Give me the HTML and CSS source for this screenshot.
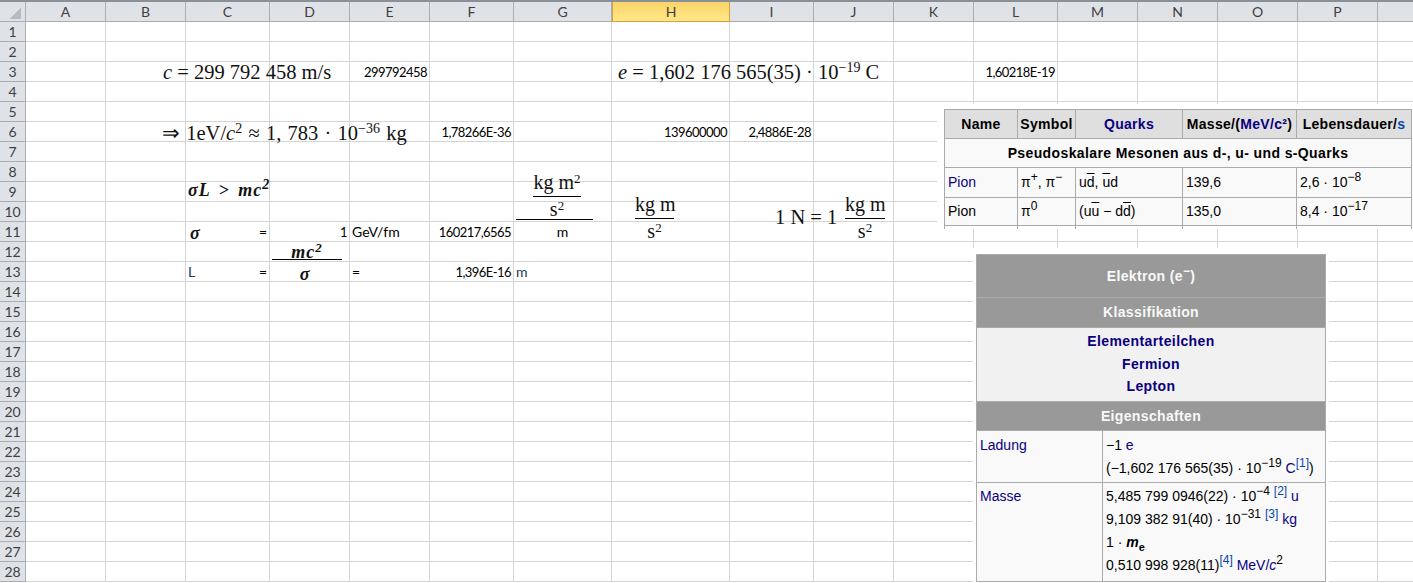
FILE: index.html
```html
<!DOCTYPE html>
<html lang="de">
<head>
    <meta charset="UTF-8">
    <title>Elektron Tabelle</title>
    <link rel="stylesheet" href="styles.css">
</head>
<body>
<div class="sheet">
    <table class="grid">
        <colgroup>
            <col class="c-head"><col class="c80"><col class="c80"><col class="c84"><col class="c80"><col class="c80"><col class="c84"><col class="c98"><col class="c118"><col class="c84"><col class="c80"><col class="c80"><col class="c84"><col class="c80"><col class="c80"><col class="c80"><col class="c80"><col class="c36">
        </colgroup>
        <tr class="head-row"><th class="corner"></th><th>A</th><th>B</th><th>C</th><th>D</th><th>E</th><th>F</th><th>G</th><th class="active">H</th><th>I</th><th>J</th><th>K</th><th>L</th><th>M</th><th>N</th><th>O</th><th>P</th><th></th></tr>
        <tr><th>1</th><td></td><td></td><td></td><td></td><td></td><td></td><td></td><td></td><td></td><td></td><td></td><td></td><td></td><td></td><td></td><td></td><td></td></tr>
        <tr><th>2</th><td></td><td></td><td></td><td></td><td></td><td></td><td></td><td></td><td></td><td></td><td></td><td></td><td></td><td></td><td></td><td></td><td></td></tr>
        <tr><th>3</th><td></td><td></td><td></td><td></td><td class="num">299792458</td><td></td><td></td><td></td><td></td><td></td><td></td><td class="num">1,60218E-19</td><td></td><td></td><td></td><td></td><td></td></tr>
        <tr><th>4</th><td></td><td></td><td></td><td></td><td></td><td></td><td></td><td></td><td></td><td></td><td></td><td></td><td></td><td></td><td></td><td></td><td></td></tr>
        <tr><th>5</th><td></td><td></td><td></td><td></td><td></td><td></td><td></td><td></td><td></td><td></td><td></td><td></td><td></td><td></td><td></td><td></td><td></td></tr>
        <tr><th>6</th><td></td><td></td><td></td><td></td><td></td><td class="num">1,78266E-36</td><td></td><td class="num">139600000</td><td class="num">2,4886E-28</td><td></td><td></td><td></td><td></td><td></td><td></td><td></td><td></td></tr>
        <tr><th>7</th><td></td><td></td><td></td><td></td><td></td><td></td><td></td><td></td><td></td><td></td><td></td><td></td><td></td><td></td><td></td><td></td><td></td></tr>
        <tr><th>8</th><td></td><td></td><td></td><td></td><td></td><td></td><td></td><td></td><td></td><td></td><td></td><td></td><td></td><td></td><td></td><td></td><td></td></tr>
        <tr><th>9</th><td></td><td></td><td></td><td></td><td></td><td></td><td></td><td></td><td></td><td></td><td></td><td></td><td></td><td></td><td></td><td></td><td></td></tr>
        <tr><th>10</th><td></td><td></td><td></td><td></td><td></td><td></td><td></td><td></td><td></td><td></td><td></td><td></td><td></td><td></td><td></td><td></td><td></td></tr>
        <tr><th>11</th><td></td><td></td><td class="eq">=</td><td class="num">1</td><td>GeV/fm</td><td class="num">160217,6565</td><td class="mid">m</td><td></td><td></td><td></td><td></td><td></td><td></td><td></td><td></td><td></td><td></td></tr>
        <tr><th>12</th><td></td><td></td><td></td><td></td><td></td><td></td><td></td><td></td><td></td><td></td><td></td><td></td><td></td><td></td><td></td><td></td><td></td></tr>
        <tr><th>13</th><td></td><td></td><td class="split"><span class="blue">L</span><span>=</span></td><td></td><td>=</td><td class="num">1,396E-16</td><td class="blue">m</td><td></td><td></td><td></td><td></td><td></td><td></td><td></td><td></td><td></td><td></td></tr>
        <tr><th>14</th><td></td><td></td><td></td><td></td><td></td><td></td><td></td><td></td><td></td><td></td><td></td><td></td><td></td><td></td><td></td><td></td><td></td></tr>
        <tr><th>15</th><td></td><td></td><td></td><td></td><td></td><td></td><td></td><td></td><td></td><td></td><td></td><td></td><td></td><td></td><td></td><td></td><td></td></tr>
        <tr><th>16</th><td></td><td></td><td></td><td></td><td></td><td></td><td></td><td></td><td></td><td></td><td></td><td></td><td></td><td></td><td></td><td></td><td></td></tr>
        <tr><th>17</th><td></td><td></td><td></td><td></td><td></td><td></td><td></td><td></td><td></td><td></td><td></td><td></td><td></td><td></td><td></td><td></td><td></td></tr>
        <tr><th>18</th><td></td><td></td><td></td><td></td><td></td><td></td><td></td><td></td><td></td><td></td><td></td><td></td><td></td><td></td><td></td><td></td><td></td></tr>
        <tr><th>19</th><td></td><td></td><td></td><td></td><td></td><td></td><td></td><td></td><td></td><td></td><td></td><td></td><td></td><td></td><td></td><td></td><td></td></tr>
        <tr><th>20</th><td></td><td></td><td></td><td></td><td></td><td></td><td></td><td></td><td></td><td></td><td></td><td></td><td></td><td></td><td></td><td></td><td></td></tr>
        <tr><th>21</th><td></td><td></td><td></td><td></td><td></td><td></td><td></td><td></td><td></td><td></td><td></td><td></td><td></td><td></td><td></td><td></td><td></td></tr>
        <tr><th>22</th><td></td><td></td><td></td><td></td><td></td><td></td><td></td><td></td><td></td><td></td><td></td><td></td><td></td><td></td><td></td><td></td><td></td></tr>
        <tr><th>23</th><td></td><td></td><td></td><td></td><td></td><td></td><td></td><td></td><td></td><td></td><td></td><td></td><td></td><td></td><td></td><td></td><td></td></tr>
        <tr><th>24</th><td></td><td></td><td></td><td></td><td></td><td></td><td></td><td></td><td></td><td></td><td></td><td></td><td></td><td></td><td></td><td></td><td></td></tr>
        <tr><th>25</th><td></td><td></td><td></td><td></td><td></td><td></td><td></td><td></td><td></td><td></td><td></td><td></td><td></td><td></td><td></td><td></td><td></td></tr>
        <tr><th>26</th><td></td><td></td><td></td><td></td><td></td><td></td><td></td><td></td><td></td><td></td><td></td><td></td><td></td><td></td><td></td><td></td><td></td></tr>
        <tr><th>27</th><td></td><td></td><td></td><td></td><td></td><td></td><td></td><td></td><td></td><td></td><td></td><td></td><td></td><td></td><td></td><td></td><td></td></tr>
        <tr><th>28</th><td></td><td></td><td></td><td></td><td></td><td></td><td></td><td></td><td></td><td></td><td></td><td></td><td></td><td></td><td></td><td></td><td></td></tr>
    </table>

    <!-- formeln liegen frei auf dem blatt -->
    <div class="math m-c"><i>c</i> = 299 792 458 m/s</div>
    <div class="math m-e"><i>e</i> = 1,602 176 565(35) · 10<sup>−19</sup> C</div>
    <div class="math m-ev">⇒ 1eV/<i>c</i><sup>2</sup> ≈ 1, 783 · 10<sup>−36</sup> kg</div>
    <div class="math bold m-sl">σL &gt; mc<sup>2</sup></div>
    <div class="math bold m-sigma">σ</div>
    <div class="frac bold f-mc"><span class="top">mc<sup>2</sup></span><span class="bottom">σ</span></div>
    <div class="frac f-kgm2"><span class="top">kg m<sup>2</sup></span><span class="bottom">s<sup>2</sup></span></div>
    <div class="rule r-outer"></div>
    <div class="frac f-kgm"><span class="top">kg m</span><span class="bottom">s<sup>2</sup></span></div>
    <div class="math m-n">1 N = 1</div>
    <div class="frac f-n"><span class="top">kg m</span><span class="bottom">s<sup>2</sup></span></div>

    <!-- eingefuegte wikipedia bilder -->
    <div class="paste paste-mesons">
        <table class="wiki mesons">
            <colgroup><col class="w73"><col class="w58"><col class="w107"><col class="w114"><col></colgroup>
            <tr class="r29">
                <th>Name</th><th>Symbol</th><th><a>Quarks</a></th><th>Masse/(<a>MeV/c²</a>)</th><th>Lebensdauer/<a class="new">s</a></th>
            </tr>
            <tr class="r29"><td colspan="5" class="section">Pseudoskalare Mesonen aus d-, u- und s-Quarks</td></tr>
            <tr class="r30">
                <td><a>Pion</a></td><td>π<sup>+</sup>, π<sup>−</sup></td><td>u<span class="over">d</span>, <span class="over">u</span>d</td><td>139,6</td><td>2,6 · 10<sup>−8</sup></td>
            </tr>
            <tr class="r28">
                <td>Pion</td><td>π<sup>0</sup></td><td>(u<span class="over">u</span> − d<span class="over">d</span>)</td><td>135,0</td><td>8,4 · 10<sup>−17</sup></td>
            </tr>
            <tr class="stub"><td></td><td></td><td></td><td></td><td></td></tr>
        </table>
    </div>

    <div class="paste paste-electron">
        <table class="wiki electron">
            <colgroup><col class="w126"><col></colgroup>
            <tr class="dark r43"><th colspan="2">Elektron (e<sup>−</sup>)</th></tr>
            <tr class="dark r30"><th colspan="2" class="lift">Klassifikation</th></tr>
            <tr class="light"><td colspan="2" class="links">
                <a>Elementarteilchen</a><br><a>Fermion</a><br><a>Lepton</a>
            </td></tr>
            <tr class="dark r29"><th colspan="2">Eigenschaften</th></tr>
            <tr class="r52">
                <td><a>Ladung</a></td>
                <td>−1 <a>e</a><br>(−1,602 176 565(35) · 10<sup>−19</sup> <a>C</a><sup><a class="new">[1]</a></sup>)</td>
            </tr>
            <tr class="r99">
                <td><a>Masse</a></td>
                <td>5,485 799 0946(22) · 10<sup>−4</sup> <sup><a class="new">[2]</a></sup> <a>u</a><br>
                    9,109 382 91(40) · 10<sup>−31</sup> <sup><a class="new">[3]</a></sup> <a>kg</a><br>
                    1 · <b><i>m</i><sub>e</sub></b><br>
                    0,510 998 928(11)<sup><a class="new">[4]</a></sup> <a>MeV/<i>c</i></a><sup>2</sup></td>
            </tr>
        </table>
    </div>
</div>
</body>
</html>
```

FILE: styles.css
```css
html, body {
    margin: 0;
    padding: 0;
    height: 583px;
    overflow: hidden;
    background: #fff;
}
.sheet {
    position: relative;
    height: 583px;
    overflow: hidden;
    border-top: 2px solid #8a9097;
    box-sizing: border-box;
}

/* tabelle */
.grid {
    table-layout: fixed;
    border-collapse: separate;
    border-spacing: 0;
    width: 1440px;
    font-family: Lato, "Liberation Sans", sans-serif;
    font-size: 14px;
    color: #000;
}
.c-head { width: 26px; }
.c80 { width: 80px; }
.c84 { width: 84px; }
.c98 { width: 98px; }
.c118 { width: 118px; }
.c36 { width: 63px; }
.grid tr { height: 20px; }
.grid td, .grid th {
    box-sizing: border-box;
    padding: 0 2px;
    overflow: visible;
    white-space: nowrap;
    font-weight: normal;
    line-height: 16px;
}
.grid td {
    border-right: 1px solid #d4d4d4;
    border-bottom: 1px solid #d4d4d4;
    padding-top: 1px;
}
.grid th {
    background: #dfe3e8;
    color: #3f3f3f;
    font-size: 14px;
    text-align: center;
    border-right: 1px solid #a9aeb4;
    border-bottom: 1px solid #a9aeb4;
    padding: 0;
}
.grid .corner {
    background: #dfe3e8 linear-gradient(135deg, transparent 50%, #b7bbc1 50%) no-repeat 10px 6px / 11px 11px;
}
.grid th.active {
    background: linear-gradient(#fcd46a, #ffe888);
    border-right-color: #d99f3a;
    border-left: 1px solid #d99f3a;
    border-bottom-color: #d99f3a;
}
.num {
    text-align: right;
    font-size: 13px;
    letter-spacing: -0.55px;
}
.eq { text-align: right; }
.mid { text-align: center; }
.blue { color: #17365d; }
.split span:first-child { float: left; }
.split span:last-child { float: right; }

/* formeln */
.math, .frac {
    position: absolute;
    font-family: "Liberation Serif", serif;
    font-size: 20.5px;
    line-height: 24px;
    color: #111;
    white-space: nowrap;
}
.math sup, .frac sup {
    font-size: 14px;
    line-height: 0;
    vertical-align: 7px;
}
.bold {
    font-weight: bold;
    font-style: italic;
    font-size: 18px;
    letter-spacing: 1px;
}
.frac {
    display: flex;
    flex-direction: column;
    align-items: center;
    line-height: 20px;
    font-size: 20px;
}
.frac .top {
    align-self: stretch;
    text-align: center;
    border-bottom: 1px solid #000;
    padding-bottom: 4px;
}
.frac .bottom { padding-top: 2px; }
.frac sup { font-size: 13px; vertical-align: 6px; }
.frac.bold { font-size: 18px; }

.m-c { left: 163px; top: 58px; }
.m-e { left: 618px; top: 58px; }
.m-ev { left: 162px; top: 119px; word-spacing: 1.1px; }
.m-sl { left: 188px; top: 176px; word-spacing: 3px; }
.m-sigma { left: 190px; top: 219px; }
.f-mc { left: 272px; top: 241px; width: 70px; }
.f-mc .top { line-height: 13px; padding-top: 3px; padding-bottom: 0; }
.f-mc .bottom { padding-top: 4px; padding-right: 4px; }
.f-kgm2 { left: 533px; top: 170px; width: 48px; }
.f-kgm { left: 635px; top: 192px; width: 39px; }
.m-n { left: 775px; top: 203px; }
.f-n { left: 845px; top: 192px; width: 40px; }
.rule {
    position: absolute;
    height: 1px;
    background: #000;
}
.r-outer { left: 516px; top: 217px; width: 77px; }

/* eingefuegte tabellen */
.paste {
    position: absolute;
    background: #fff;
}
.paste-mesons { left: 937px; top: 102px; width: 476px; height: 124px; padding: 5px 0 0 7px; box-sizing: border-box; }
.paste-electron { left: 973px; top: 246px; width: 356px; height: 337px; padding: 6px 0 0 3px; box-sizing: border-box; }
.wiki {
    table-layout: fixed;
    border-collapse: collapse;
    font-family: "Liberation Sans", Arial, sans-serif;
    font-size: 14px;
    color: #000;
    background: #f9f9f9;
}
.wiki th, .wiki td {
    border: 1px solid #aaa;
    padding: 0 3px;
    white-space: nowrap;
}
.wiki a { color: #0b0080; }
.wiki a.new { color: #0645ad; }
.wiki sup {
    font-size: 12px;
    line-height: 0;
    vertical-align: 6px;
}
.wiki sub { font-size: 11px; line-height: 0; }
.over { text-decoration: overline; }

.mesons { width: 468px; }
.mesons th {
    background: #dfdfdf;
    text-align: center;
    padding: 0 2px;
    letter-spacing: 0.3px;
}
.mesons td { padding-bottom: 2px; }
.mesons .section {
    text-align: center;
    font-weight: bold;
    letter-spacing: 0.38px;
    padding-bottom: 0;
}
.mesons .stub { height: 3px; }
.mesons .stub td {
    border-bottom: 0;
    padding: 0;
    background: #fff;
}
.w73 { width: 73px; }
.w58 { width: 58px; }
.w107 { width: 107px; }
.w114 { width: 114px; }
.w126 { width: 126px; }
.r28 { height: 28px; }
.r29 { height: 29px; }
.r30 { height: 30px; }
.r43 { height: 43px; }
.r52 { height: 52px; }
.r99 { height: 99px; }

.electron { width: 350px; }
.dark th {
    background: #999;
    color: #f8f8f8;
    text-align: center;
    letter-spacing: 0.35px;
}
.dark th.lift { padding-bottom: 2px; }
.light td { background: #f1f1f1; }
.links {
    text-align: center;
    font-weight: bold;
    letter-spacing: 0.4px;
    line-height: 22.5px;
}
.electron .links { padding: 2px 0 3.5px; }
.electron .r52 td, .electron .r99 td {
    vertical-align: top;
    line-height: 23px;
    padding-top: 3px;
}
.electron .r99 td { padding-top: 2px; }
```
